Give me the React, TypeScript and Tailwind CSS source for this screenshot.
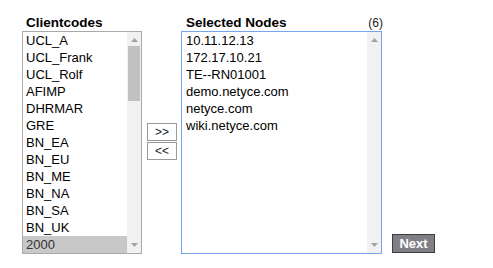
import React from 'react'

const clientCodes = ['UCL_A', 'UCL_Frank', 'UCL_Rolf', 'AFIMP', 'DHRMAR', 'GRE', 'BN_EA', 'BN_EU', 'BN_ME', 'BN_NA', 'BN_SA', 'BN_UK', '2000']
const selectedNodes = ['10.11.12.13', '172.17.10.21', 'TE--RN01001', 'demo.netyce.com', 'netyce.com', 'wiki.netyce.com']

function ArrowUp() {
  return (
    <svg width="7" height="4" viewBox="0 0 7 4">
      <polygon points="3.5,0 7,4 0,4" fill="#a3a3a3" />
    </svg>
  )
}

function ArrowDown() {
  return (
    <svg width="7" height="4" viewBox="0 0 7 4">
      <polygon points="0,0 7,0 3.5,4" fill="#a3a3a3" />
    </svg>
  )
}

function Scrollbar({ thumb }: { thumb?: boolean }) {
  return (
    <div className="w-[14px] h-full bg-[#f1f1f1] flex flex-col items-center">
      <div className="h-[14px] flex items-center justify-center pt-[2px]">
        <ArrowUp />
      </div>
      <div className="flex-1 w-full px-[1px]">
        {thumb && <div className="h-[55px] w-full bg-[#c1c1c1]" />}
      </div>
      <div className="h-[14px] flex items-center justify-center pb-[2px]">
        <ArrowDown />
      </div>
    </div>
  )
}

export default function App() {
  return (
    <div className="w-[493px] h-[268px] bg-white text-black font-['Liberation_Sans',Arial,sans-serif]">
      <div className="flex items-start pt-[15px] pl-[22px]">
        {/* Clientcodes */}
        <div className="flex flex-col w-[120px]">
          <div className="h-[16px] leading-[15px] pl-[4px] text-[13.5px] font-bold">Clientcodes</div>
          <div className="h-[223px] border border-[#a9a9a9] flex">
            <div className="flex-1 flex flex-col">
              {clientCodes.map((code) => (
                <div
                  key={code}
                  className={
                    code === '2000'
                      ? 'h-[17px] leading-[17px] px-[3px] text-[13px] bg-[#c8c8c8] text-[#333]'
                      : 'h-[17px] leading-[17px] px-[3px] text-[13px]'
                  }
                >
                  {code}
                </div>
              ))}
            </div>
            <Scrollbar thumb />
          </div>
        </div>

        {/* Move buttons */}
        <div className="flex flex-col gap-[1px] mt-[108px] ml-[5px] mr-[4px]">
          <button className="w-[30px] h-[18px] border border-[#999] bg-white text-[12px] leading-none text-[#222] flex items-center justify-center">
            &gt;&gt;
          </button>
          <button className="w-[30px] h-[18px] border border-[#999] bg-white text-[12px] leading-none text-[#222] flex items-center justify-center">
            &lt;&lt;
          </button>
        </div>

        {/* Selected Nodes */}
        <div className="flex flex-col w-[201px]">
          <div className="h-[16px] leading-[15px] pl-[5px] flex items-baseline justify-between">
            <span className="text-[13.5px] font-bold">Selected Nodes</span>
            <span className="text-[12px] text-[#222] -mr-[1px]">(6)</span>
          </div>
          <div className="h-[223px] border border-[#78a4ee] flex">
            <div className="flex-1 flex flex-col">
              {selectedNodes.map((node) => (
                <div key={node} className="h-[17px] leading-[17px] px-[4px] text-[13px]">
                  {node}
                </div>
              ))}
            </div>
            <Scrollbar />
          </div>
        </div>

        <button className="self-end ml-[10px] mb-[1px] w-[43px] h-[19px] bg-[#7f7f87] border border-[#3d3d3d] text-white text-[13px] font-bold leading-none flex items-center justify-center">
          Next
        </button>
      </div>
    </div>
  )
}
